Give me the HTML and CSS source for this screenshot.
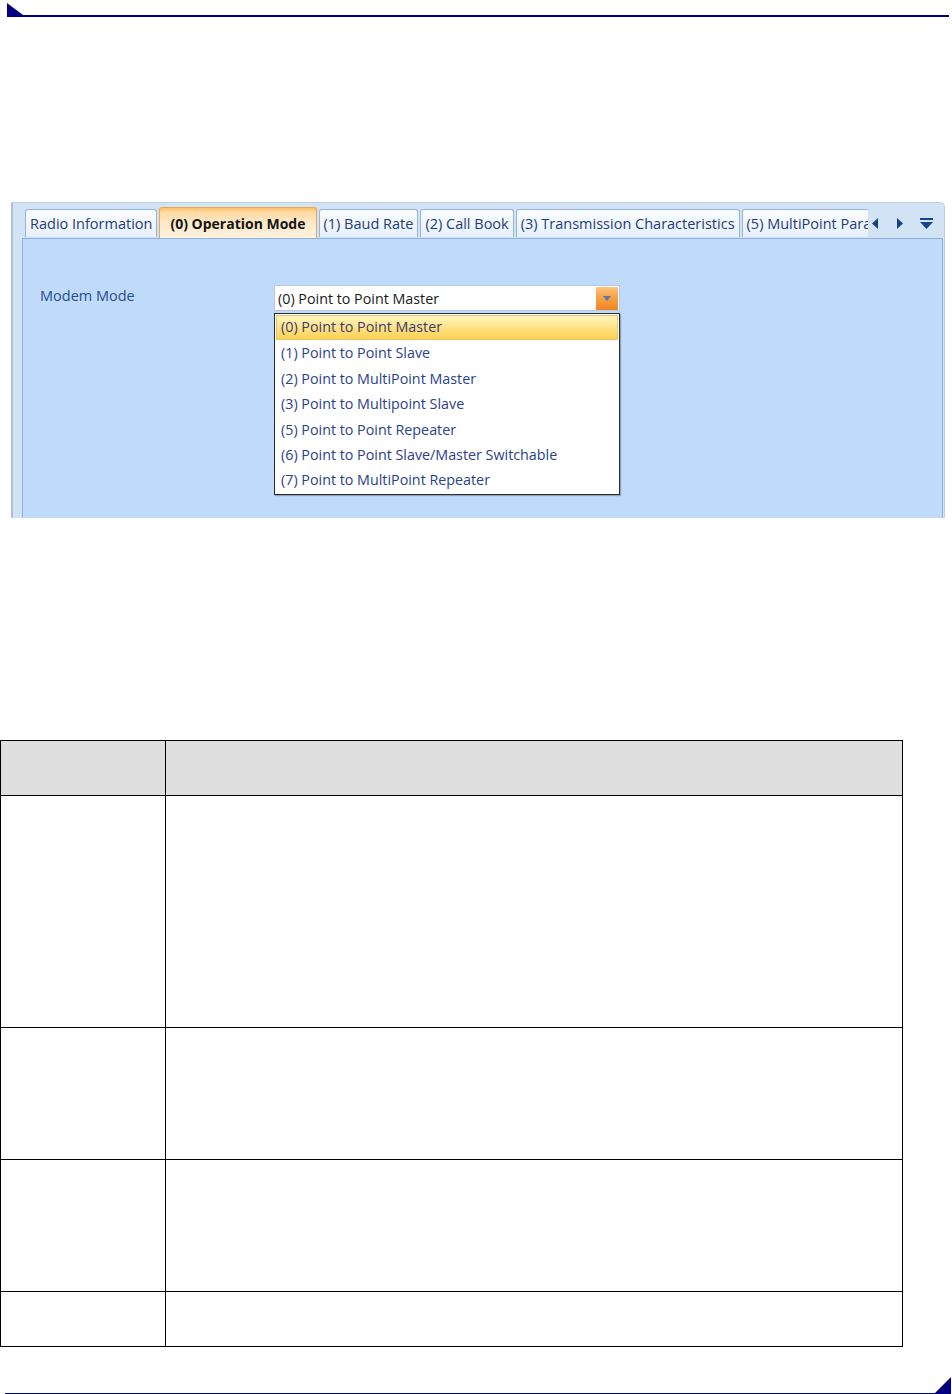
FILE: index.html
```html
<!DOCTYPE html>
<html lang="en">
<head>
    <meta charset="UTF-8">
    <title>Operation Mode</title>
    <link rel="stylesheet" href="styles.css">
</head>
<body>
    <div class="page-head">
        <svg width="16" height="12" viewBox="0 0 16 12"><path d="M0 0V12H16Z" fill="#000080"/></svg>
    </div>

    <div class="shot">
        <div class="tab-strip">
            <div class="tab-list">
                <div class="tab">Radio Information</div>
                <div class="tab active">(0) Operation Mode</div>
                <div class="tab">(1) Baud Rate</div>
                <div class="tab">(2) Call Book</div>
                <div class="tab">(3) Transmission Characteristics</div>
                <div class="tab">(5) MultiPoint Parameters</div>
            </div>
            <div class="tab-nav">
                <svg width="7" height="11" viewBox="0 0 7 11"><path d="M6 0V11L0 5.5Z"/></svg>
                <svg width="7" height="11" viewBox="0 0 7 11"><path d="M1 0V11L7 5.5Z"/></svg>
                <svg width="13" height="11" viewBox="0 0 13 11"><rect x="0" y="0" width="13" height="2"/><path d="M0 4H13L6.5 11Z"/></svg>
            </div>
        </div>
        <div class="tab-panel">
            <div class="form-row">
                <label class="form-label">Modem Mode</label>
                <div class="combo">
                    <div class="combo-box">
                        <span class="combo-value">(0) Point to Point Master</span>
                        <span class="combo-btn">
                            <svg width="8" height="5" viewBox="0 0 8 5"><path d="M0 0H8L4 5Z" fill="#5b78ae"/></svg>
                        </span>
                    </div>
                    <ul class="combo-list">
                        <li class="selected">(0) Point to Point Master</li>
                        <li>(1) Point to Point Slave</li>
                        <li>(2) Point to MultiPoint Master</li>
                        <li>(3) Point to Multipoint Slave</li>
                        <li>(5) Point to Point Repeater</li>
                        <li>(6) Point to Point Slave/Master Switchable</li>
                        <li>(7) Point to MultiPoint Repeater</li>
                    </ul>
                </div>
            </div>
        </div>
    </div>

    <table class="param-table">
        <thead>
            <tr class="row-head"><th class="col-name"></th><th></th></tr>
        </thead>
        <tbody>
            <tr class="row-xl"><td></td><td></td></tr>
            <tr class="row-lg"><td></td><td></td></tr>
            <tr class="row-lg"><td></td><td></td></tr>
            <tr class="row-sm"><td></td><td></td></tr>
        </tbody>
    </table>

    <div class="page-foot">
        <svg width="16" height="16" viewBox="0 0 16 16"><path d="M16 0V16H0Z" fill="#000080"/></svg>
    </div>
</body>
</html>
```

FILE: styles.css
```css
html, body {
    margin: 0;
    overflow: hidden;
}
body {
    font-family: "Open Sans", "Liberation Sans", sans-serif;
    background: #fff;
    width: 952px;
    height: 1394px;
}
.page-head {
    display: flex;
    align-items: flex-end;
    margin: 3px 3px 0 7px;
    border-bottom: 2px solid #000080;
    height: 12px;
}
.page-head svg {
    display: block;
}
.page-foot {
    display: flex;
    justify-content: flex-end;
    align-items: flex-end;
    margin: 30px 1px 0 5px;
    border-bottom: 2px solid #000080;
    height: 16px;
}
.page-foot svg {
    display: block;
}

/* screenshot of the configuration tool */
.shot {
    box-sizing: border-box;
    margin: 185px 0 0 11px;
    width: 934px;
    height: 316px;
    background: #d3e3f6;
    border-left: 2px solid #aebfd6;
    border-top: 1px solid #bccfe8;
    border-right: 1px solid #bccfe8;
    border-top-right-radius: 5px;
    padding: 5px 1px 0 9px;
    display: flex;
    flex-direction: column;
    overflow: hidden;
}
.tab-strip {
    display: flex;
    align-items: flex-end;
    height: 30px;
}
.tab-list {
    display: flex;
    align-items: flex-end;
    gap: 2px;
    padding-left: 3px;
    width: 846px;
    overflow: hidden;
    height: 31px;
}
.tab {
    flex: none;
    box-sizing: border-box;
    height: 28px;
    padding: 0 4px;
    line-height: 27px;
    font-size: 14.5px;
    color: #1f3c78;
    white-space: nowrap;
    background: linear-gradient(#fbfdff, #e6f0fd);
    border: 1px solid #93b4de;
    border-bottom: none;
    border-radius: 3px 3px 0 0;
    margin-bottom: 1px;
}
.tab.active {
    height: 31px;
    margin-bottom: 0;
    padding: 0 10px;
    line-height: 31px;
    font-size: 14px;
    font-weight: bold;
    color: #141414;
    background: linear-gradient(#ffbf69 0, #ffd9a0 4px, #ffe8c8 14px, #fff2de);
    border-color: #efa54c;
}
.tab-nav {
    flex: none;
    width: 75px;
    height: 30px;
    display: flex;
    align-items: center;
    gap: 17px;
    padding-left: 4px;
    box-sizing: border-box;
    fill: #15428b;
}
.tab-nav svg {
    display: block;
}
.tab-panel {
    flex: 1;
    background: #c0dafb;
    border: 1px solid #8db1e0;
    border-bottom: none;
    padding: 46px 0 0 17px;
}
.form-row {
    display: flex;
    align-items: flex-start;
}
.form-label {
    width: 234px;
    flex: none;
    font-size: 14.5px;
    color: #2a4c8f;
    line-height: 22px;
}
.combo {
    position: relative;
    width: 346px;
}
.combo-box {
    box-sizing: border-box;
    height: 26px;
    background: #fff;
    border: 1px solid #b6c9e4;
    display: flex;
    align-items: center;
    justify-content: space-between;
    padding: 0 0 0 3px;
}
.combo-value {
    font-size: 14.3px;
    color: #1a1a1a;
}
.combo-btn {
    width: 22px;
    height: 23px;
    margin-right: 1px;
    background: linear-gradient(#fcc581, #f7a246 45%, #f18525);
    display: flex;
    align-items: center;
    justify-content: center;
}
.combo-list {
    position: absolute;
    top: 28px;
    left: 0;
    box-sizing: border-box;
    width: 346px;
    margin: 0;
    padding: 1px;
    list-style: none;
    background: #fff;
    border: 1px solid #2b2b2b;
    box-shadow: 1px 1px 1px rgba(0, 0, 0, 0.25);
}
.combo-list li {
    box-sizing: border-box;
    height: 25.4px;
    line-height: 25px;
    padding-left: 5px;
    font-size: 14.3px;
    color: #2b3f8c;
    white-space: nowrap;
}
.combo-list li.selected {
    color: #3a3c6e;
    border: 1px solid #e7c56a;
    padding-left: 4px;
    line-height: 22px;
    background: linear-gradient(#fff4c0, #ffe386 50%, #ffd152);
}

/* parameter table */
.param-table {
    margin-top: 222px;
    width: 903px;
    border-collapse: collapse;
}
.param-table th,
.param-table td {
    border: 1px solid #000;
    padding: 0;
}
.param-table th {
    background: #dfdfdf;
}
.col-name {
    width: 164px;
}
.row-head { height: 55px; }
.row-xl { height: 232px; }
.row-lg { height: 132px; }
.row-sm { height: 55px; }
```
